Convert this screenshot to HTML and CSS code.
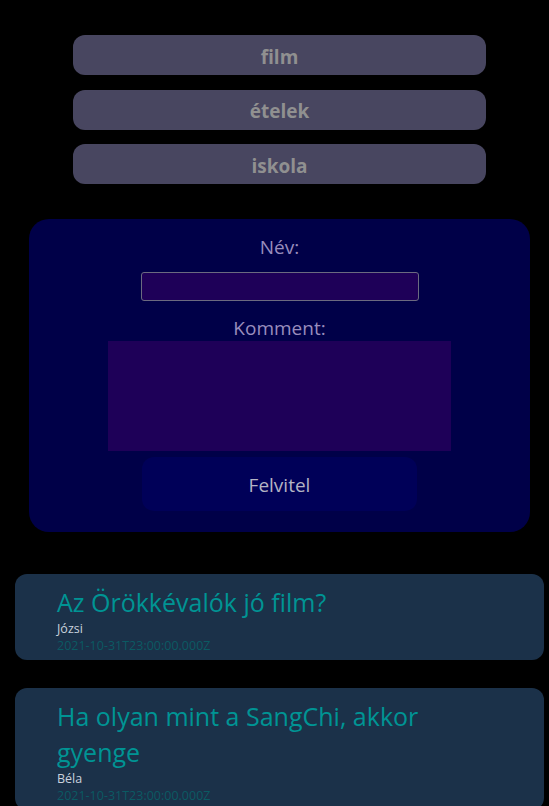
FILE: index.html
```html
<!DOCTYPE html>
<html lang="hu">
<head>
<meta charset="utf-8">
<title>Fórum</title>
<link rel="stylesheet" href="styles.css">
</head>
<body>
<div class="page">
  <nav class="topics">
    <button class="topic">film</button>
    <button class="topic">ételek</button>
    <button class="topic">iskola</button>
  </nav>
  <form class="entry">
    <label class="entry-label" for="nev">Név:</label>
    <input class="entry-input" id="nev" type="text">
    <label class="entry-label entry-label-tight" for="komment">Komment:</label>
    <textarea class="entry-text" id="komment"></textarea>
    <button class="entry-submit" type="button">Felvitel</button>
  </form>
  <section class="posts">
    <article class="post">
      <h2 class="post-title">Az Örökkévalók jó film?</h2>
      <div class="post-author">Józsi</div>
      <div class="post-date">2021-10-31T23:00:00.000Z</div>
    </article>
    <article class="post">
      <h2 class="post-title">Ha olyan mint a SangChi, akkor gyenge</h2>
      <div class="post-author">Béla</div>
      <div class="post-date">2021-10-31T23:00:00.000Z</div>
    </article>
  </section>
</div>
</body>
</html>
```

FILE: styles.css
```css
html, body {
  margin: 0;
  padding: 0;
  background: #000000;
}

body {
  font-family: "Open Sans", "Noto Sans", sans-serif;
  overflow: hidden;
}

.page {
  margin-left: 10px;
  width: 539px;
}

.topics {
  display: flex;
  flex-direction: column;
  gap: 14.5px;
  padding: 35px 63px 0;
}

.topic {
  height: 40px;
  border: none;
  border-radius: 12px;
  background: #484660;
  color: #909090;
  font-family: "Open Sans", "Noto Sans", sans-serif;
  font-weight: 700;
  font-size: 19px;
  padding: 3px 0 0;
}

.entry {
  margin: 35px 19px 0;
  height: 313px;
  box-sizing: border-box;
  padding: 14px 0 21px;
  background: #000048;
  border-radius: 20px;
  display: flex;
  flex-direction: column;
  align-items: center;
}

.entry-label {
  font-size: 19px;
  line-height: 28px;
  color: #998dbd;
}

.entry-input {
  margin-top: 11px;
  width: 278px;
  height: 29px;
  box-sizing: border-box;
  background: #1e0058;
  border: 1px solid #6b6a80;
  border-radius: 3px;
}

.entry-label-tight {
  margin-top: 14px;
  line-height: 26px;
}

.entry-text {
  width: 343px;
  height: 110px;
  box-sizing: border-box;
  background: #1e0058;
  border: none;
  resize: none;
  margin: 0;
}

.entry-submit {
  margin-top: 6px;
  width: 275px;
  height: 54px;
  border: none;
  border-radius: 12px;
  background: #000058;
  color: #b4b4c4;
  font-family: "Open Sans", "Noto Sans", sans-serif;
  font-size: 19px;
  padding: 2px 0 0;
}

.posts {
  margin-top: 42px;
  display: flex;
  flex-direction: column;
  gap: 28px;
  padding: 0 5px;
}

.post {
  background: #1b3149;
  border-radius: 12px;
  padding: 10px 42px 6px;
}

.post-title {
  margin: 0;
  font-size: 25px;
  line-height: 36px;
  font-weight: 400;
  color: #009494;
}

.post-author {
  font-size: 12.5px;
  line-height: 17px;
  color: #c9d1dd;
}

.post-date {
  font-size: 12.5px;
  line-height: 17px;
  color: #0b5a63;
}
```
